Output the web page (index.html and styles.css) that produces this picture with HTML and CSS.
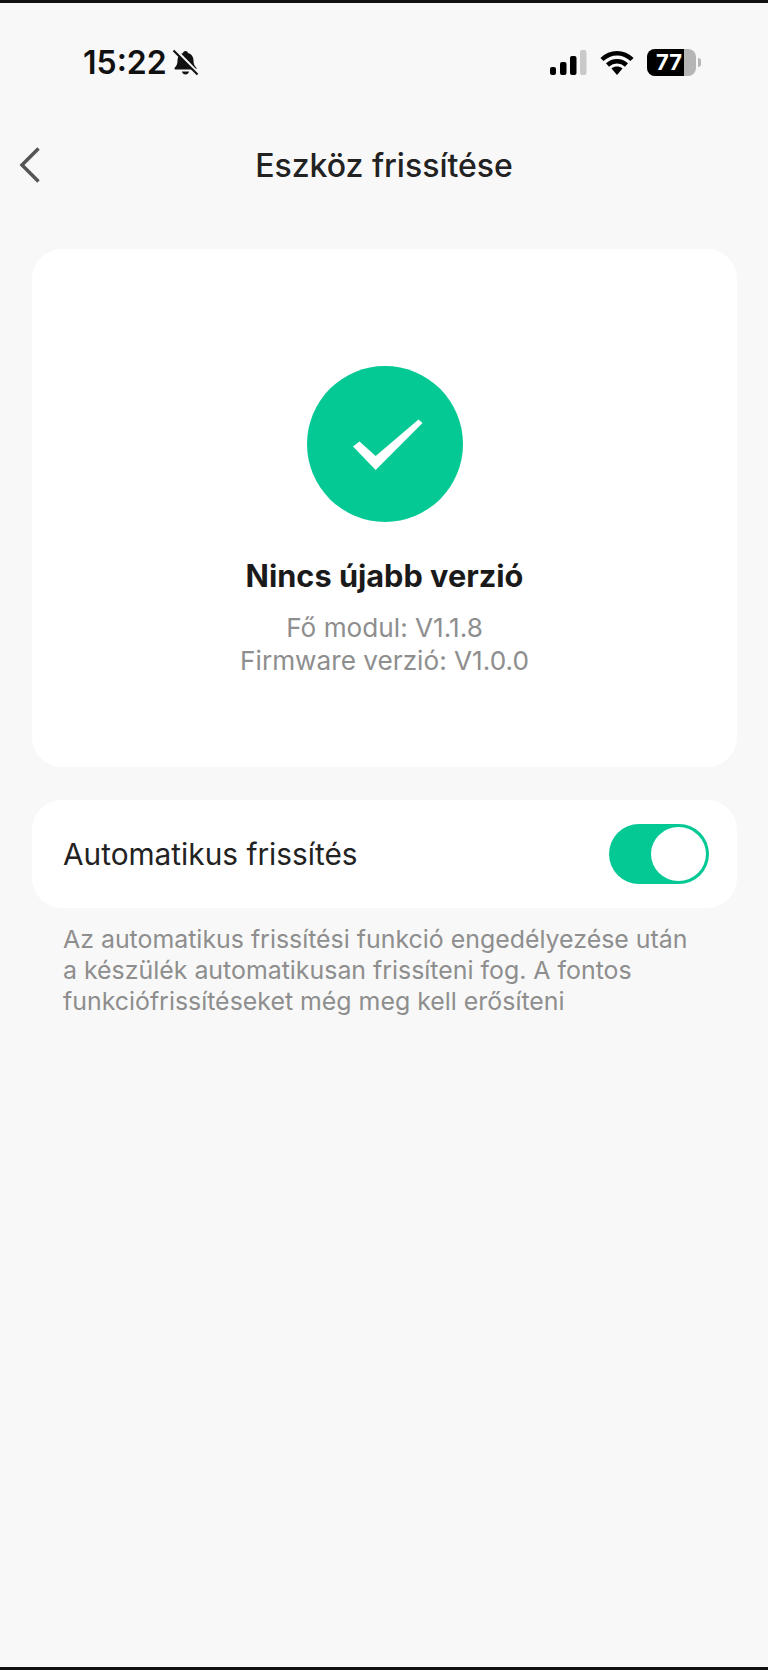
FILE: index.html
```html
<!DOCTYPE html>
<html lang="en">
  <head>
    <meta charset="UTF-8" />
    <title>Eszköz frissítése</title>
    <link rel="stylesheet" href="styles.css">
  </head>
  <body>
    <div class="statusbar">
      <div class="clock">
        <span>15:22</span>
        <svg width="27" height="27" viewBox="0 0 27 27">
          <path d="M13.500 2c1.300 0 2.300.9 2.500 2 3.600 1 5.500 3.800 5.500 7.500 0 3.400.9 5.300 2.800 7.300.6.700.2 1.700-.7 1.700H3.400c-.9 0-1.300-1-.7-1.700 1.900-2 2.800-3.900 2.800-7.300 0-3.700 1.900-6.500 5.500-7.500.2-1.100 1.200-2 2.500-2z" fill="#111" />
          <path d="M10 22.500h7c-.3 1.700-1.700 3-3.500 3s-3.200-1.300-3.500-3z" fill="#111" />
          <path d="M3.500 1L26 24" stroke="#f8f8f8" stroke-width="3" />
          <path d="M1.500 1.500L25.500 25.500" stroke="#111" stroke-width="2.200" />
        </svg>
      </div>
      <div class="indicators">
        <svg width="38" height="26" viewBox="0 0 38 26">
          <rect x="1" y="17" width="6" height="8" rx="2" fill="#000" />
          <rect x="11" y="12" width="6.500" height="13" rx="2" fill="#000" />
          <rect x="21" y="6" width="6.500" height="19" rx="2" fill="#000" />
          <rect x="31" y="0" width="6.500" height="25" rx="2" fill="#c9c9c9" />
        </svg>
        <svg width="34" height="26" viewBox="0 0 34 26">
          <path d="M2 9.500C10.500 1 23.500 1 32 9.500M7.500 15c5.500-5 13.500-5 19 0" fill="none" stroke="#000" stroke-width="4.500" />
          <path d="M11.500 18.500c3.200-2.600 7.800-2.600 11 0L17 25z" fill="#000" />
        </svg>
        <div class="battery">
          <div class="battery-body"><span class="battery-fill">77</span></div>
          <div class="battery-nub"></div>
        </div>
      </div>
    </div>

    <div class="nav">
      <svg class="back" width="22" height="38" viewBox="0 0 22 38">
        <path d="M19.500 2.500L3 19l16.500 16.500" fill="none" stroke="#555" stroke-width="3.500" />
      </svg>
      <h1>Eszköz frissítése</h1>
    </div>

    <div class="card status-card">
      <div class="check-circle">
        <svg width="156" height="156" viewBox="0 0 156 156">
          <path d="M46 80.500L52.500 75.500 68.700 90 111.500 53.500 115.500 57 68.700 104z" fill="#fff" />
        </svg>
      </div>
      <h2>Nincs újabb verzió</h2>
      <p class="versions">Fő modul: V1.1.8<br />Firmware verzió: V1.0.0</p>
    </div>

    <div class="card auto-row">
      <span>Automatikus frissítés</span>
      <div class="toggle"><div class="knob"></div></div>
    </div>

    <p class="note">
      Az automatikus frissítési funkció engedélyezése után<br />
      a készülék automatikusan frissíteni fog. A fontos<br />
      funkciófrissítéseket még meg kell erősíteni
    </p>
  </body>
</html>
```

FILE: styles.css
```css
* {
  box-sizing: border-box;
}

body {
  margin: 0;
  height: 1670px;
  overflow: hidden;
  background-color: #f8f8f8;
  border-top: 3px solid #111;
  border-bottom: 3px solid #111;
  font-family: "Inter", "Liberation Sans", sans-serif;
  color: #1b1b1b;
}

.statusbar {
  display: flex;
  justify-content: space-between;
  align-items: center;
  height: 27px;
  margin-top: 46px;
  padding: 0 67px 0 83px;
}

.clock {
  display: flex;
  align-items: center;
  gap: 5px;
  font-size: 32px;
  font-weight: 600;
  color: #111;
}

.indicators {
  display: flex;
  align-items: center;
  gap: 13px;
}

.battery {
  display: flex;
  align-items: center;
  gap: 2px;
}

.battery-body {
  width: 49px;
  height: 27px;
  border-radius: 8px;
  overflow: hidden;
  background-color: #b5b5b5;
}

.battery-fill {
  display: block;
  width: 37px;
  height: 27px;
  background-color: #000;
  color: #fff;
  font-size: 22px;
  font-weight: 700;
  line-height: 27px;
  text-align: right;
  padding-right: 2px;
}

.battery-nub {
  width: 3px;
  height: 9px;
  border-radius: 0 3px 3px 0;
  background-color: #b5b5b5;
}

.nav {
  position: relative;
  display: flex;
  justify-content: center;
  align-items: center;
  height: 40px;
  margin-top: 69px;
}

.back {
  position: absolute;
  left: 19px;
  top: 1px;
}

h1 {
  margin: 0;
  font-size: 32px;
  font-weight: 500;
  color: #222;
}

.card {
  margin: 0 31px 0 32px;
  background-color: #fff;
  border-radius: 30px;
}

.status-card {
  display: flex;
  flex-direction: column;
  align-items: center;
  height: 518px;
  margin-top: 64px;
  padding-top: 117px;
}

.check-circle {
  width: 156px;
  height: 156px;
  border-radius: 50%;
  background-color: #05c995;
}

h2 {
  margin: 36px 0 0;
  font-size: 30.700px;
  line-height: 36px;
  font-weight: 700;
  color: #1a1a1a;
}

.versions {
  margin: 17px 0 0;
  font-size: 26.200px;
  line-height: 33px;
  text-align: center;
  color: #8e8e8e;
}

.auto-row {
  display: flex;
  justify-content: space-between;
  align-items: center;
  height: 108px;
  margin-top: 33px;
  padding: 0 28px 0 31px;
  font-size: 29.800px;
  color: #222;
}

.toggle {
  display: flex;
  justify-content: flex-end;
  align-items: center;
  width: 100px;
  height: 60px;
  padding-right: 3px;
  border-radius: 30px;
  background-color: #05c995;
}

.knob {
  width: 55px;
  height: 54px;
  border-radius: 50%;
  background-color: #fff;
}

.note {
  margin: 16px 31px 0 63px;
  font-size: 24.900px;
  line-height: 31px;
  color: #8e8e8e;
}
```
